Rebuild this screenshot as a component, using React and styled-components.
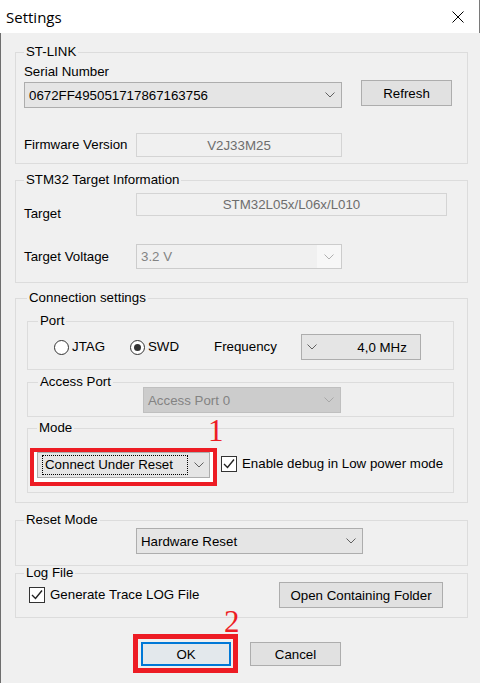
import React from "react";
import styled, { createGlobalStyle } from "styled-components";

const GlobalStyle = createGlobalStyle`
  html, body { margin: 0; padding: 0; }
  body {
    font-family: "Liberation Sans", Arial, sans-serif;
    font-size: 13.3px;
    color: #000;
    background: #fff;
  }
`;

const Window = styled.div`
  width: 480px;
  height: 683px;
  display: flex;
  flex-direction: column;
  overflow: hidden;
`;

const TitleBar = styled.div`
  flex: none;
  height: 33px;
  box-sizing: border-box;
  display: flex;
  align-items: center;
  justify-content: space-between;
  padding: 0 15px 0 6px;
  background: #fff;
  border-right: 1px solid #7a7a7a;
`;

const Title = styled.span`
  font-family: "Segoe UI", "Open Sans", sans-serif;
  font-size: 15px;
`;

const Body = styled.div`
  flex: 1;
  box-sizing: border-box;
  background: #f0f0f0;
  border-left: 1px solid #6e6e6e;
  padding: 0 12px 0 14px;
`;

const Group = styled.fieldset`
  position: relative;
  min-width: 0;
  margin: ${(p) => p.$mt || 0}px 0 0;
  padding: ${(p) => p.$pad};
  border: 1px solid #dcdcdc;
`;

const Legend = styled.legend`
  margin-left: ${(p) => p.$ml || 0}px;
  padding: 0 2px;
  line-height: 14px;
`;

const Label = styled.div`
  flex: none;
  width: ${(p) => (p.$w ? `${p.$w}px` : "auto")};
  line-height: 16px;
  margin-top: ${(p) => p.$mt || 0}px;
  margin-left: ${(p) => p.$ml || 0}px;
  white-space: nowrap;
`;

const Row = styled.div`
  display: flex;
  align-items: ${(p) => p.$align || "center"};
  margin-top: ${(p) => p.$mt || 0}px;
`;

const Combo = styled.div`
  flex: none;
  display: flex;
  align-items: center;
  box-sizing: border-box;
  width: ${(p) => p.$w}px;
  height: ${(p) => p.$h || 26}px;
  margin-left: ${(p) => p.$ml || 0}px;
  margin-top: ${(p) => p.$mt || 0}px;
  padding: 0 ${(p) => p.$pr ?? 6}px 0 ${(p) => p.$pl ?? 4}px;
  border: 1px solid
    ${(p) => (p.$state === "off" ? "#bfbfbf" : p.$state === "ro" ? "#cccccc" : "#adadad")};
  background: ${(p) => (p.$state === "off" ? "#cccccc" : p.$state === "ro" ? "#f0f0f0" : "#e5e5e5")};
  color: ${(p) => (p.$state ? "#838383" : "#000")};
  white-space: nowrap;
`;

const ComboText = styled.span`
  flex: 1;
  text-align: ${(p) => p.$align || "left"};
`;

const ArrowBox = styled.div`
  align-self: stretch;
  width: 24px;
  margin-right: -6px;
  display: flex;
  align-items: center;
  justify-content: center;
  background: #f7f7f7;
`;

const Focus = styled.span`
  box-sizing: border-box;
  width: 146px;
  height: 20px;
  margin-left: 1px;
  padding-left: 2px;
  border: 1px dotted #000;
  line-height: 18px;
  flex: none;
`;

const Field = styled.div`
  flex: none;
  box-sizing: border-box;
  width: ${(p) => p.$w}px;
  height: ${(p) => p.$h}px;
  display: flex;
  align-items: center;
  justify-content: center;
  border: 1px solid #d4d4d4;
  background: #f0f0f0;
  color: #6d6d6d;
`;

const Button = styled.div`
  flex: none;
  box-sizing: border-box;
  width: ${(p) => p.$w}px;
  height: ${(p) => p.$h || 26}px;
  margin-left: ${(p) => (p.$ml === "auto" ? "auto" : `${p.$ml || 0}px`)};
  margin-right: ${(p) => p.$mr || 0}px;
  margin-top: ${(p) => p.$mt || 0}px;
  display: flex;
  align-items: center;
  justify-content: center;
  background: ${(p) => (p.$default ? "#e3e8ec" : "#e1e1e1")};
  border: ${(p) => (p.$default ? "2px solid #0078d7" : "1px solid #adadad")};
  white-space: nowrap;
`;

const Radio = styled.span`
  flex: none;
  box-sizing: border-box;
  width: 15px;
  height: 15px;
  margin-left: ${(p) => p.$ml || 0}px;
  margin-right: 3px;
  border-radius: 50%;
  border: 1px solid #333;
  background: #fff;
  display: flex;
  align-items: center;
  justify-content: center;
  &::after {
    content: "";
    display: ${(p) => (p.$on ? "block" : "none")};
    width: 7px;
    height: 7px;
    border-radius: 50%;
    background: #333;
  }
`;

const Check = styled.span`
  flex: none;
  box-sizing: border-box;
  width: 16px;
  height: 16px;
  margin-left: ${(p) => p.$ml || 0}px;
  margin-right: 5px;
  margin-top: ${(p) => p.$mt || 0}px;
  border: 1px solid #333;
  background: #fff;
  display: flex;
  align-items: center;
  justify-content: center;
`;

const Mark = styled.div`
  position: relative;
  flex: none;
  margin-left: ${(p) => p.$ml || 0}px;
  padding: ${(p) => p.$pad};
  border: ${(p) => p.$bw}px solid #ed1c24;
  background: #fff;
`;

const MarkBare = styled(Mark)`
  background: transparent;
`;

const Badge = styled.span`
  position: absolute;
  left: ${(p) => p.$x}px;
  top: ${(p) => p.$y}px;
  font-family: "Liberation Serif", "Times New Roman", serif;
  font-size: 31px;
  line-height: 1;
  color: #ed1c24;
`;

const Footer = styled.div`
  display: flex;
  align-items: flex-start;
  margin: 16px 0 0 118px;
`;

const Chevron = ({ color = "#606060" }) => (
  <svg width="10" height="6" viewBox="0 0 10 6">
    <polyline points="0.5,0.5 5,5 9.5,0.5" fill="none" stroke={color} strokeWidth="1" />
  </svg>
);

const Tick = () => (
  <svg width="12" height="12" viewBox="0 0 12 12">
    <polyline points="1,6 4.5,9.5 11,1.5" fill="none" stroke="#222" strokeWidth="1.4" />
  </svg>
);

export default function App() {
  return (
    <>
      <GlobalStyle />
      <Window>
        <TitleBar>
          <Title>Settings</Title>
          <svg width="12" height="12" viewBox="0 0 12 12">
            <path d="M0.5 0.5 L11.5 11.5 M11.5 0.5 L0.5 11.5" stroke="#000" strokeWidth="1" />
          </svg>
        </TitleBar>
        <Body>
          <Group $mt={12} $pad="5px 15px 6px 8px">
            <Legend>ST-LINK</Legend>
            <Label>Serial Number</Label>
            <Row $align="flex-start">
              <Combo $w={318} $mt={2}>
                <ComboText>0672FF495051717867163756</ComboText>
                <Chevron />
              </Combo>
              <Button $w={91} $ml={19}>Refresh</Button>
            </Row>
            <Row $mt={25}>
              <Label $w={112}>Firmware Version</Label>
              <Field $w={206} $h={24}>V2J33M25</Field>
            </Row>
          </Group>

          <Group $mt={9} $pad="6px 15px 13px 8px">
            <Legend>STM32 Target Information</Legend>
            <Row $align="flex-start">
              <Label $w={112} $mt={13}>Target</Label>
              <Field $w={311} $h={23}>STM32L05x/L06x/L010</Field>
            </Row>
            <Row $mt={22}>
              <Label $w={112}>Target Voltage</Label>
              <Combo $w={206} $h={25} $state="ro">
                <ComboText>3.2 V</ComboText>
                <ArrowBox>
                  <Chevron color="#b0b0b0" />
                </ArrowBox>
              </Combo>
            </Row>
          </Group>

          <Group $mt={8} $pad="9px 13px 9px 11px">
            <Legend>Connection settings</Legend>

            <Group $pad="6px 10px 9px 10px">
              <Legend>Port</Legend>
              <Row>
                <Radio $ml={16} />
                <Label>JTAG</Label>
                <Radio $ml={25} $on />
                <Label>SWD</Label>
                <Label $ml={35}>Frequency</Label>
                <Combo $w={120} $ml={24} $pl={5} $pr={13}>
                  <Chevron />
                  <ComboText $align="right">4,0 MHz</ComboText>
                </Combo>
              </Row>
            </Group>

            <Group $mt={5} $pad="0 10px 3px 10px">
              <Legend>Access Port</Legend>
              <Combo $w={198} $ml={105} $mt={-2} $state="off">
                <ComboText>Access Port 0</ComboText>
                <Chevron color="#a8a8a8" />
              </Combo>
            </Group>

            <Group $mt={4} $pad="13px 10px 6px 2px">
              <Legend $ml={7}>Mode</Legend>
              <Row $align="flex-start">
                <Mark $bw={4} $pad="0 3px 4px 3px">
                  <Badge $x={174} $y={-37}>1</Badge>
                  <Combo $w={173} $pl={3} $pr={5}>
                    <Focus>Connect Under Reset</Focus>
                    <ComboText />
                    <Chevron />
                  </Combo>
                </Mark>
                <Check $ml={4} $mt={8}>
                  <Tick />
                </Check>
                <Label $mt={8}>Enable debug in Low power mode</Label>
              </Row>
            </Group>
          </Group>

          <Group $mt={10} $pad="1px 15px 11px 8px">
            <Legend>Reset Mode</Legend>
            <Combo $w={227} $ml={112}>
              <ComboText>Hardware Reset</ComboText>
              <Chevron />
            </Combo>
          </Group>

          <Group $pad="2px 15px 9px 8px">
            <Legend>Log File</Legend>
            <Row>
              <Check $ml={5}>
                <Tick />
              </Check>
              <Label>Generate Trace LOG File</Label>
              <Button $w={164} $ml="auto" $mr={9}>Open Containing Folder</Button>
            </Row>
          </Group>

          <Footer>
            <MarkBare $bw={5} $pad="3px 2px 2px 3px">
              <Badge $x={86} $y={-33}>2</Badge>
              <Button $w={90} $h={24} $default>OK</Button>
            </MarkBare>
            <Button $w={91} $h={24} $ml={12} $mt={8}>Cancel</Button>
          </Footer>
        </Body>
      </Window>
    </>
  );
}
